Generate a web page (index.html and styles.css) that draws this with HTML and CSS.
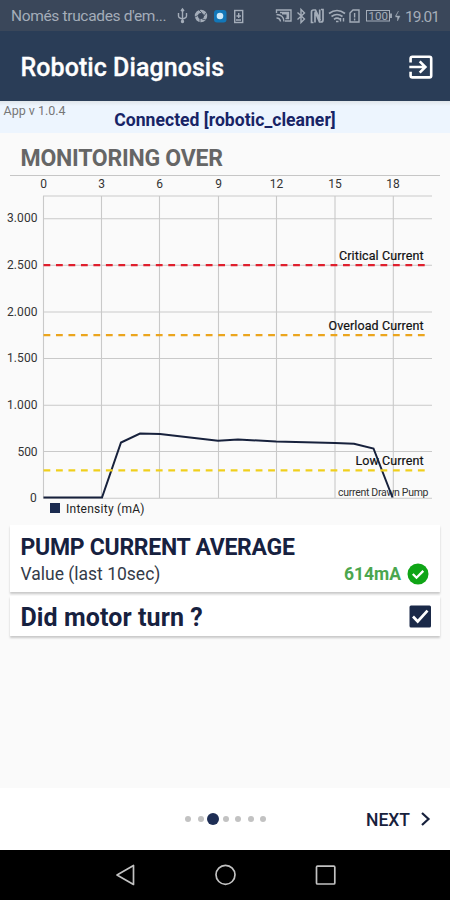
FILE: index.html
```html
<!DOCTYPE html>
<html lang="en">
<head>
<meta charset="utf-8">
<title>Robotic Diagnosis</title>
<link rel="stylesheet" href="styles.css">
</head>
<body>
<div class="screen">
  <div class="status">
    <span class="carrier">Només trucades d'em...</span>
    <svg class="status-icons" width="274" height="31" viewBox="174 0 274 31" fill="none" stroke="#a4adb9" stroke-width="1.4">
      <path d="M182.500 10v12M178.500 13v3q0 2 4 3q4-1 4-3v-3M181 11l1.500-2l1.500 2"/>
      <circle cx="182.500" cy="21.500" r="1" fill="#a4adb9"/>
      <circle cx="201" cy="16" r="4.600" stroke-width="3.200"/>
      <path d="M199 10l3 3M206 13l-2 3M206 20l-4-1M200 22l0-4M195 17l4-2" stroke="#3a475a" stroke-width=".8"/>
      <rect x="214" y="10" width="12.500" height="12.500" rx="3" fill="#1277b8" stroke="none"/>
      <circle cx="220" cy="16" r="3.300" fill="#cdeafa" stroke="none"/>
      <rect x="234.700" y="10.500" width="8" height="12"/>
      <path d="M238.700 13v5M236.500 16h4.400M236 20h5"/>
      <path d="M276.500 13v-3h14.500v11h-6M276.500 14.500q7 0 7.500 7M276.500 18q3.500 0 4 3.500M280 12.500h8.500v6h-3"/>
      <path d="M282 13.500h5.500v4.500" stroke-width="2"/>
      <path d="M297.500 12.500l7 6.500l-3.500 3.500v-13l3.500 3.500l-7 6.500"/>
      <path d="M313.500 22.500h-2v-10.500q0-2 2-2h2l5 10.500M321 9.500h2v10.500q0 2-2 2h-1.500l-4.500-10.500M315 12.500v10M319.700 9.500v10" stroke-width="1.700"/>
      <path d="M329 13.500q8-6 16 0M331.500 16.500q5.500-4 11 0M334 19.300q3-2.300 6 0" stroke-width="1.700"/>
      <path d="M336 21.500h2.500M340.500 18v3.500M343.500 18v3.500"/>
      <path d="M350 13l3-3h6v12h-9zM354.600 13v4.500M354.600 18.500v2"/>
      <rect x="366.500" y="10.500" width="23" height="10.500" stroke-width="1"/>
      <path d="M391 13.500v4.500" stroke-width="1.800"/>
      <text x="368.500" y="20.200" class="battery" textLength="19.500">100</text>
      <path d="M398.500 11l-3 5h4.500l-2.500 5l0-4h-2z" fill="#a4adb9" stroke-width=".4"/>
      <text x="405" y="21.500" class="clock" textLength="35">19.01</text>
    </svg>
  </div>
  <header class="appbar">
    <h1>Robotic Diagnosis</h1>
    <svg width="26" height="26" viewBox="0 0 26 26" fill="none" stroke="#fff" stroke-width="2.600">
      <path d="M2.600 8.500v-4q0-1.700 1.700-1.700h17.200q1.700 0 1.700 1.700v17.200q0 1.700-1.700 1.700h-17.200q-1.700 0-1.700-1.700v-4M1.300 13h15.500M11.700 7.300l5.700 5.700l-5.700 5.700"/>
    </svg>
  </header>
  <div class="connection">
    <span class="version">App v 1.0.4</span>
    <span class="device">Connected [robotic_cleaner]</span>
  </div>
  <main>
    <h2 class="section-title"><span>MONITORING OVER</span></h2>
    <svg class="chart" width="450" height="346" viewBox="0 176 450 346">
      <g stroke="#c9c9c9" stroke-width="1.100" fill="none">
        <path d="M43.500 196V498M101.500 196V498M159.500 196V498M218.500 196V498M276.500 196V498M335 196V498M393.300 196V498"/>
        <path d="M43 196H432M43 218.700H432M43 265.300H432M43 312H432M43 358.500H432M43 405.300H432M43 451.500H432M43 498.300H432"/>
      </g>
      <g class="axis" text-anchor="middle">
        <text x="43.500" y="187.500">0</text><text x="101.500" y="187.500">3</text><text x="159.500" y="187.500">6</text><text x="218.500" y="187.500">9</text><text x="276.500" y="187.500">12</text><text x="335" y="187.500">15</text><text x="393" y="187.500">18</text>
      </g>
      <g class="axis">
        <text x="7" y="222" textLength="30.500">3.000</text><text x="7" y="269" textLength="30.500">2.500</text><text x="7" y="315.500" textLength="30.500">2.000</text><text x="7" y="362" textLength="30.500">1.500</text><text x="7" y="408.500" textLength="30.500">1.000</text><text x="17.500" y="455.500" textLength="20">500</text><text x="30" y="502">0</text>
      </g>
      <text class="limit" x="339" y="259.700" textLength="84.500">Critical Current</text>
      <text class="limit" x="328.500" y="329.700" textLength="95">Overload Current</text>
      <text class="limit" x="355.500" y="465" textLength="68">Low Current</text>
      <text class="caption" x="338" y="495.500" textLength="90.500">current Drawn Pump</text>
      <path d="M43.500 497.500H102L121 442.500L140 433.500L160 434L218 440.800L238 439.500L276 441.500L335 443L354 443.700L373.500 448.500L392.500 497.500" fill="none" stroke="#17213c" stroke-width="2"/>
      <g fill="none" stroke-width="2.300" stroke-dasharray="6.800 5.680">
        <path d="M43.500 265.200H427" stroke="#df1f2d"/>
        <path d="M43.500 335.200H427" stroke="#eba51d"/>
        <path d="M43.500 470.300H427" stroke="#f0cf1c"/>
      </g>
      <rect x="50" y="503" width="10" height="10" fill="#1b2b50"/>
      <text class="legend" x="66" y="513" textLength="78.500">Intensity (mA)</text>
    </svg>
    <section class="card average">
      <h3>PUMP CURRENT AVERAGE</h3>
      <div class="row">
        <span class="label">Value (last 10sec)</span>
        <span class="value">614mA</span>
        <svg width="22" height="22" viewBox="0 0 22 22"><circle cx="11" cy="11" r="10.500" fill="#0fa516"/><path d="M5.800 11l3.700 3.700l6.800-6.800" fill="none" stroke="#fff" stroke-width="2.300"/></svg>
      </div>
    </section>
    <section class="card question">
      <h3>Did motor turn ?</h3>
      <svg width="23" height="23" viewBox="0 0 23 23"><rect x=".5" y=".5" width="21.500" height="22" rx="1.500" fill="#1a2948"/><path d="M4 11.500l4.700 5l9.800-10.800" fill="none" stroke="#fff" stroke-width="2.700"/></svg>
    </section>
  </main>
  <footer class="pager">
    <div class="dots"><i></i><i></i><i class="on"></i><i></i><i></i><i></i><i></i></div>
    <div class="next"><span>NEXT</span>
      <svg width="12" height="16" viewBox="0 0 12 16"><path d="M2 2l6.500 6l-6.500 6" fill="none" stroke="#17213c" stroke-width="2.200"/></svg>
    </div>
  </footer>
  <nav class="navbar">
    <svg width="450" height="50" viewBox="0 850 450 50" fill="none" stroke="#c2c2c2" stroke-width="1.700" stroke-linejoin="round">
      <path d="M117 875l16.500-9.500v19zM216 874.800a9.500 9.500 0 1 0 19 0a9.500 9.500 0 1 0-19 0z"/>
      <rect x="316.500" y="866.200" width="18.300" height="17.800" rx="1"/>
    </svg>
  </nav>
</div>
</body>
</html>
```
FILE: styles.css
```css
* { box-sizing: border-box; }
body { margin: 0; font-family: Roboto, sans-serif; }
h1, h2, h3 { margin: 0; }
svg { display: block; flex: none; }
.screen { width: 450px; height: 900px; display: flex; flex-direction: column; background: #fafafa; overflow: hidden; }
.status { height: 31px; flex: none; display: flex; align-items: center; background: #3a475a; color: #a4adb9; }
.carrier { width: 163px; margin-left: 11px; font-size: 15.500px; letter-spacing: -.34px; white-space: nowrap; }
.battery { font-size: 11.500px; fill: #a4adb9; stroke: none; }
.clock { font-size: 15.500px; fill: #a4adb9; stroke: none; }
.appbar { height: 69.500px; flex: none; display: flex; align-items: center; justify-content: space-between; padding: 4px 16.500px 0 20.500px; background: #2a3d57; color: #fff; }
.appbar h1 { font-size: 25px; font-weight: 500; line-height: 30px; letter-spacing: .06px; padding-top: 1px; -webkit-text-stroke: .3px #fff; }
.appbar svg { margin-top: -2px; }
.connection { height: 32.500px; flex: none; display: grid; background: linear-gradient(#dfe5ea, #edf5fe 5px); }
.connection span { grid-area: 1 / 1; }
.version { font-size: 12.500px; line-height: 15px; padding: 2px 0 0 3.500px; color: #777; }
.device { font-size: 17.600px; font-weight: 700; line-height: 20px; padding-top: 9px; text-align: center; color: #172466; }
main { flex: 1; }
.section-title { height: 43px; margin: 0 10px; padding: 12px 0 0 10.500px; border-bottom: 1px solid #c6c6c6; font-size: 23px; line-height: 28px; font-weight: 700; letter-spacing: -.24px; color: #666; }
.axis { font-size: 12px; fill: #333; }
.limit { font-size: 12.500px; fill: #111; stroke: #111; stroke-width: .2px; }
.caption { font-size: 10.500px; fill: #333; }
.legend { font-size: 12px; fill: #222; }
.card { margin: 0 10px; background: #fff; color: #17213f; box-shadow: 0 1.500px 2px rgba(0, 0, 0, .2); }
.average { height: 67px; margin-top: 3px; padding: 9px 11px 0 10.500px; }
.average h3 { font-size: 23px; font-weight: 700; line-height: 28px; letter-spacing: -.28px; }
.row { display: flex; align-items: center; margin-top: 1px; height: 22px; }
.label { flex: 1; font-size: 17.500px; color: #343b49; }
.value { margin-right: 6px; font-size: 17.500px; font-weight: 700; color: #4ba64e; }
.question { height: 40px; margin-top: 4px; padding: 0 8px 0 10.500px; display: flex; align-items: center; justify-content: space-between; }
.question h3 { font-size: 25px; font-weight: 700; line-height: 30px; padding-top: 4px; letter-spacing: .1px; }
.pager { height: 62px; flex: none; display: flex; justify-content: flex-end; align-items: center; background: #fff; }
.dots { display: flex; align-items: center; margin-right: 100px; gap: 6.500px; }
.dots i { width: 6px; height: 6px; border-radius: 50%; background: #c2c2c2; }
.dots .on { width: 12px; height: 12px; margin: 0 -3px; background: #1e2e55; }
.next { display: flex; align-items: center; gap: 10px; width: 84px; color: #17213c; font-size: 17.500px; font-weight: 500; }
.next span { padding-top: 2px; }
.navbar { height: 50px; flex: none; background: #000; }
```
